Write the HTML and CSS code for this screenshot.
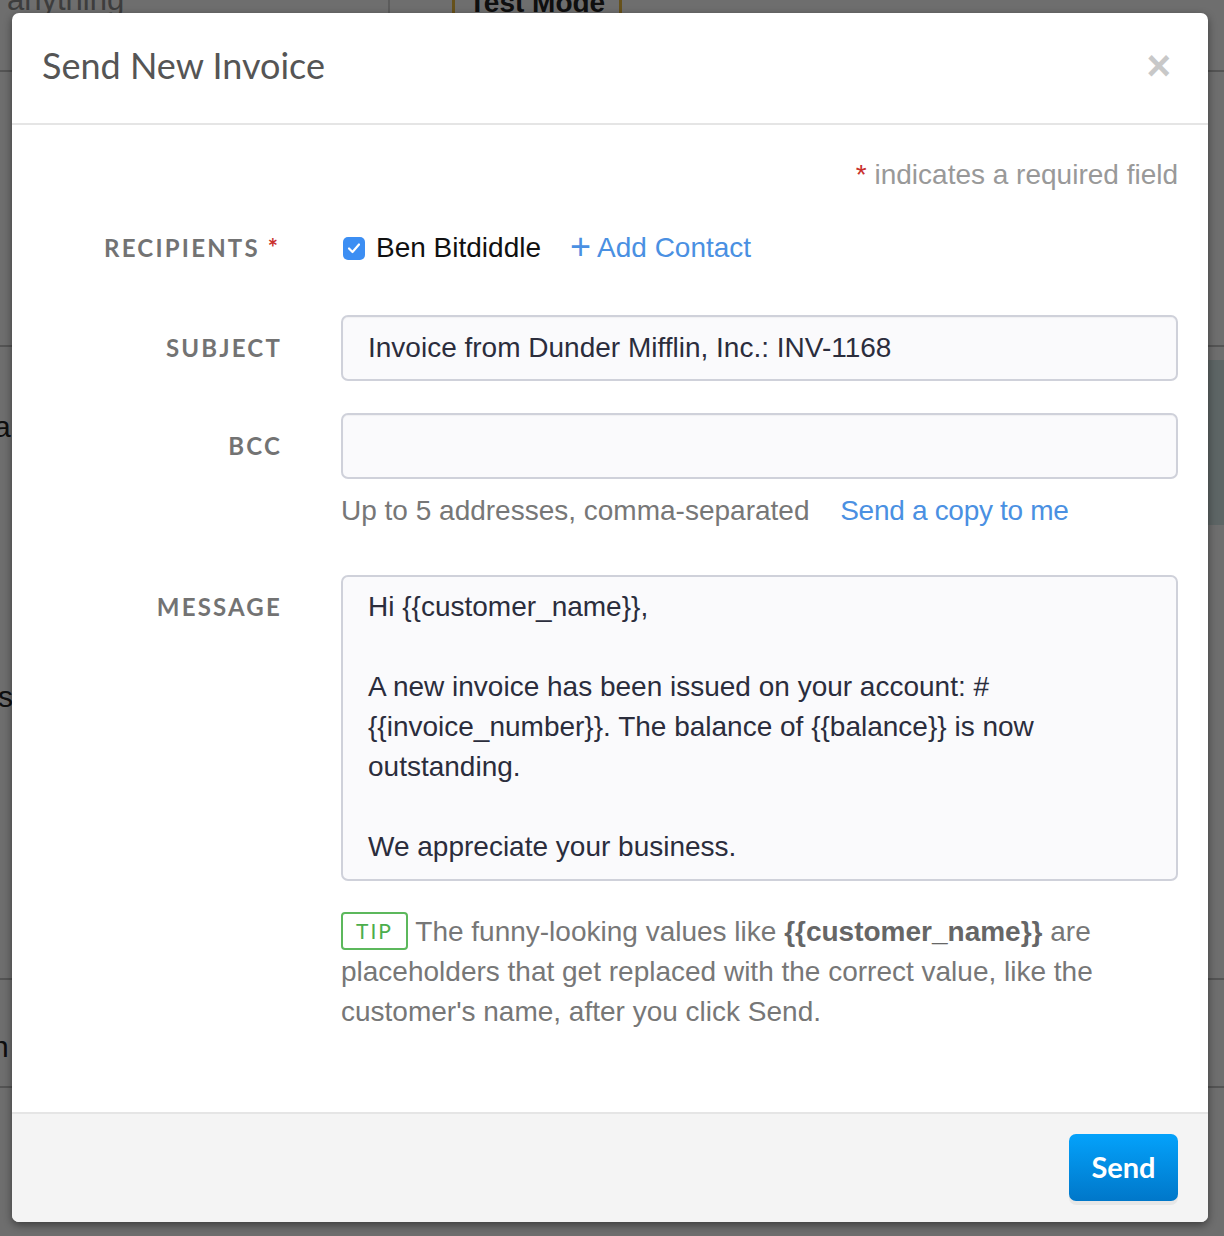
FILE: index.html
```html
<!DOCTYPE html>
<html lang="en">
<head>
<meta charset="utf-8">
<title>Send New Invoice</title>
<link rel="stylesheet" href="styles.css">
</head>
<body>
<div class="backdrop" aria-hidden="true">
  <div class="bd-search">r anything</div>
  <div class="bd-divider"></div>
  <div class="bd-test">Test Mode</div>
  <div class="bd-line bd-l1"></div>
  <div class="bd-line bd-l2"></div>
  <div class="bd-line bd-l3"></div>
  <div class="bd-line bd-l4"></div>
  <div class="bd-char bd-c1">a</div>
  <div class="bd-char bd-c2">s</div>
  <div class="bd-char bd-c3">n</div>
  <div class="bd-char bd-c4">n</div>
  <div class="bd-panel"></div>
</div>
<div class="overlay"></div>

<div class="modal">
  <header class="modal-header">
    <h1 class="modal-title">Send New Invoice</h1>
    <button class="close" type="button" aria-label="Close">&times;</button>
  </header>

  <div class="modal-body">
    <p class="required-note"><span class="star">*</span> indicates a required field</p>

    <div class="form-row row-recipients">
      <div class="label">Recipients <span class="star">*</span></div>
      <div class="field recipients">
        <label class="contact">
          <span class="checkbox">
            <svg viewBox="0 0 22 22" width="22" height="22"><path d="M6 11.5 L9.5 15 L16 7.5" fill="none" stroke="#fff" stroke-width="2.2" stroke-linecap="round" stroke-linejoin="round"/></svg>
          </span>
          Ben Bitdiddle
        </label>
        <a class="add-contact" href="#"><span class="plus">+</span> Add Contact</a>
      </div>
    </div>

    <div class="form-row row-input">
      <div class="label">Subject</div>
      <div class="field">
        <div class="input">Invoice from Dunder Mifflin, Inc.: INV-1168</div>
      </div>
    </div>

    <div class="form-row row-input row-bcc">
      <div class="label">BCC</div>
      <div class="field">
        <div class="input"></div>
        <div class="help">Up to 5 addresses, comma-separated <a class="copy" href="#">Send a copy to me</a></div>
      </div>
    </div>

    <div class="form-row row-message">
      <div class="label">Message</div>
      <div class="field">
        <div class="textarea">
          <p>Hi {{customer_name}},</p>
          <p>A new invoice has been issued on your account: #<br>{{invoice_number}}. The balance of {{balance}} is now<br>outstanding.</p>
          <p>We appreciate your business.</p>
        </div>
        <p class="tip"><span class="tip-badge">TIP</span> The funny-looking values like <strong>{{customer_name}}</strong> are placeholders that get replaced with the correct value, like the customer's name, after you click Send.</p>
      </div>
    </div>
  </div>

  <footer class="modal-footer">
    <button class="send" type="button">Send</button>
  </footer>
</div>
</body>
</html>
```

FILE: styles.css
```css
* { box-sizing: border-box; }

html, body {
  margin: 0;
  padding: 0;
}

body {
  width: 1224px;
  height: 1236px;
  overflow: hidden;
  position: relative;
  background: #f3f3f3;
  font-family: "Liberation Sans", Arial, Helvetica, sans-serif;
}

/* page behind the dimmed overlay */
.backdrop {
  position: absolute;
  inset: 0;
}
.bd-search {
  position: absolute;
  left: -12px;
  top: -18px;
  font-size: 31px;
  color: #888;
}
.bd-divider {
  position: absolute;
  left: 388px;
  top: 0;
  width: 2px;
  height: 14px;
  background: #ccc;
}
.bd-test {
  position: absolute;
  left: 452px;
  top: -12px;
  width: 170px;
  height: 30px;
  border-left: 3px solid #e2b33d;
  border-right: 3px solid #e2b33d;
  text-align: center;
  font-weight: bold;
  font-size: 28px;
  color: #222;
  line-height: 30px;
}
.bd-line {
  position: absolute;
  height: 2px;
  background: #bbb;
  left: 0;
  width: 1224px;
}
.bd-l1 { top: 70px; }
.bd-l2 { top: 345px; }
.bd-l3 { top: 978px; }
.bd-l4 { top: 1086px; }
.bd-char {
  position: absolute;
  font-size: 30px;
  color: #222;
}
.bd-c1 { left: -6px; top: 410px; }
.bd-c2 { left: -2px; top: 680px; }
.bd-c3 { left: -8px; top: 1030px; }
.bd-c4 { left: 1206px; top: 410px; }
.bd-panel {
  position: absolute;
  left: 1208px;
  top: 360px;
  width: 16px;
  height: 165px;
  background: #cfe0e0;
}

.overlay {
  position: absolute;
  inset: 0;
  background: rgba(0, 0, 0, 0.55);
}

/* modal */
.modal {
  position: relative;
  margin: 13px 0 0 12px;
  width: 1196px;
  height: 1209px;
  background: #fff;
  border-radius: 7px;
  box-shadow: 0 3px 9px rgba(0, 0, 0, 0.45);
  display: flex;
  flex-direction: column;
  overflow: hidden;
}

.modal-header {
  height: 112px;
  border-bottom: 2px solid #e5e5e5;
  display: flex;
  align-items: center;
  justify-content: space-between;
  padding: 0 37px 0 30px;
  flex: none;
}
.modal-title {
  margin: 0;
  font-family: Lato, "Noto Sans", sans-serif;
  font-weight: 400;
  font-size: 36px;
  color: #555;
  padding-bottom: 6px;
}
.close {
  border: 0;
  background: none;
  padding: 0;
  font-family: "Liberation Sans", Arial, sans-serif;
  font-weight: bold;
  font-size: 42px;
  line-height: 1;
  color: #c8c8c8;
  margin-bottom: 4px;
}

.modal-body {
  flex: 1;
  padding: 30px 30px 0 30px;
  font-size: 28px;
  line-height: 40px;
}

.required-note {
  margin: 0;
  text-align: right;
  color: #999;
}
.star { color: #c9302c; }

.form-row {
  display: grid;
  grid-template-columns: 240px 1fr;
  column-gap: 59px;
}
.label {
  text-align: right;
  font-family: Lato, "Noto Sans", sans-serif;
  font-weight: 700;
  font-size: 24px;
  letter-spacing: 2.2px;
  text-transform: uppercase;
  color: #737373;
  line-height: 40px;
}
.label .star { letter-spacing: 0; margin-right: 4px; }

.row-recipients { margin-top: 33px; }
.recipients {
  display: flex;
  align-items: center;
  gap: 29px;
  height: 40px;
}
.contact {
  display: flex;
  align-items: center;
  gap: 11px;
  color: #111;
  padding-left: 2px;
  height: 40px;
}
.checkbox {
  width: 22px;
  height: 23px;
  border-radius: 5px;
  background: #3c8ef3;
  display: inline-flex;
  align-items: center;
  justify-content: center;
}
.add-contact {
  color: #4a90e2;
  text-decoration: none;
  display: flex;
  align-items: center;
  gap: 6px;
  height: 40px;
}
.plus {
  font-size: 36px;
  line-height: 1;
  margin-top: -2px;
}

.row-input { margin-top: 47px; }
.row-input .label { padding-top: 13px; }
.row-bcc { margin-top: 32px; }
.input {
  height: 66px;
  border: 2px solid #cfd1da;
  border-radius: 7px;
  background: #fafafc;
  padding: 11px 25px;
  color: #2b2d3c;
  box-shadow: inset 0 1px 1px rgba(0, 0, 0, 0.04);
}
.help {
  margin-top: 12px;
  color: #777;
}
.copy {
  color: #4a90e2;
  text-decoration: none;
  margin-left: 23px;
  letter-spacing: -0.3px;
}

.row-message { margin-top: 44px; }
.row-message .label { padding-top: 12px; }
.textarea {
  border: 2px solid #cfd1da;
  border-radius: 7px;
  background: #fafafc;
  padding: 10px 25px 12px;
  color: #2b2d3c;
  min-height: 306px;
}
.textarea p { margin: 0 0 40px; }
.textarea p:last-child { margin-bottom: 0; }

.tip {
  margin: 31px 0 0;
  color: #777;
  padding-right: 60px;
}
.tip strong { color: #666; }
.tip-badge {
  display: inline-block;
  border: 2px solid #5cb85c;
  border-radius: 4px;
  color: #4cae4c;
  font-family: Lato, "Noto Sans", sans-serif;
  font-size: 21px;
  letter-spacing: 2px;
  line-height: 34px;
  height: 38px;
  width: 67px;
  text-align: center;
  vertical-align: 2px;
}

.modal-footer {
  flex: none;
  height: 110px;
  background: #f4f4f4;
  border-top: 2px solid #e5e5e5;
  display: flex;
  justify-content: flex-end;
  align-items: flex-start;
  padding: 20px 30px 0;
}
.send {
  width: 109px;
  height: 67px;
  border: 0;
  border-radius: 7px;
  background: linear-gradient(#04a2fb, #0077c9);
  color: #fff;
  font-family: Lato, "Noto Sans", sans-serif;
  font-weight: 700;
  font-size: 29px;
  box-shadow: 0 4px 0 rgba(0, 0, 0, 0.05);
  padding: 0 0 3px;
}
```
